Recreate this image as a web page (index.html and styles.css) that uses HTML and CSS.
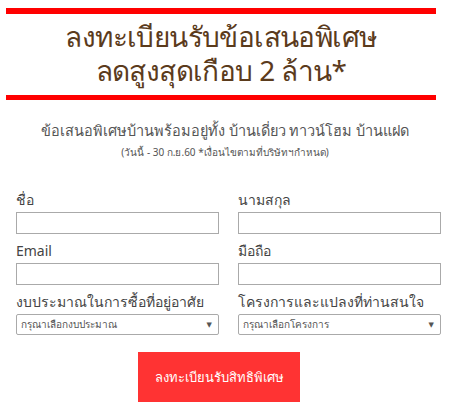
FILE: index.html
```html
<!DOCTYPE html>
<html lang="th">
<head>
    <meta charset="UTF-8">
    <meta name="viewport" content="width=device-width, initial-scale=1.0">
    <title>ลงทะเบียนรับข้อเสนอพิเศษ</title>
    <link rel="stylesheet" href="styles.css">
</head>
<body>

<div class="page">
    <div class="headline">
        <h1 class="headline-text">
            <span class="headline-line">ลงทะเบียนรับข้อเสนอพิเศษ</span>
            <span class="headline-line">ลดสูงสุดเกือบ 2 ล้าน*</span>
        </h1>
    </div>

    <p class="subtitle">ข้อเสนอพิเศษบ้านพร้อมอยู่ทั้ง บ้านเดี่ยว ทาวน์โฮม บ้านแฝด</p>
    <p class="note">(วันนี้ - 30 ก.ย.60 *เงื่อนไขตามที่บริษัทฯกำหนด)</p>

    <form class="register-form" onsubmit="return false;">
        <div class="field">
            <label class="field-label">ชื่อ</label>
            <input class="field-input" type="text">
        </div>
        <div class="field">
            <label class="field-label">นามสกุล</label>
            <input class="field-input" type="text">
        </div>
        <div class="field">
            <label class="field-label">Email</label>
            <input class="field-input" type="text">
        </div>
        <div class="field">
            <label class="field-label">มือถือ</label>
            <input class="field-input" type="text">
        </div>
        <div class="field">
            <label class="field-label">งบประมาณในการซื้อที่อยู่อาศัย</label>
            <div class="field-select">
                <span>กรุณาเลือกงบประมาณ</span>
                <span class="caret">▼</span>
            </div>
        </div>
        <div class="field">
            <label class="field-label">โครงการและแปลงที่ท่านสนใจ</label>
            <div class="field-select">
                <span>กรุณาเลือกโครงการ</span>
                <span class="caret">▼</span>
            </div>
        </div>
        <div class="actions">
            <button class="submit-button">ลงทะเบียนรับสิทธิพิเศษ</button>
        </div>
    </form>
</div>

</body>
</html>
```

FILE: styles.css
```css
body {
    font-family: "Noto Sans", "DejaVu Sans", sans-serif;
    background-color: #fff;
    margin: 0;
    padding: 0;
}

.page {
    width: 450px;
    padding-top: 8px;
}

.headline {
    margin: 0 14px 0 6px;
    border-top: 6px solid #ff0000;
    border-bottom: 5px solid #ff0000;
    padding: 5px 0 8px;
}

.headline-text {
    margin: 0;
    font-size: 28px;
    font-weight: normal;
    letter-spacing: -0.6px;
    color: #5b3b1c;
    text-align: center;
}

.headline-line {
    display: block;
    height: 34px;
    line-height: 34px;
}

.subtitle {
    margin: 20px 0 0;
    font-size: 14.5px;
    line-height: 20px;
    color: #555;
    text-align: center;
}

.note {
    margin: 5px 0 0;
    font-size: 10px;
    line-height: 14px;
    color: #555;
    text-align: center;
}

.register-form {
    display: grid;
    grid-template-columns: 203px 203px;
    column-gap: 19px;
    row-gap: 7px;
    padding: 31px 0 0 16px;
}

.field {
    display: flex;
    flex-direction: column;
}

.field-label {
    display: block;
    height: 20px;
    font-size: 14px;
    line-height: 20px;
    color: #444;
    margin-bottom: 2px;
}

.field-input {
    box-sizing: border-box;
    height: 22px;
    margin: 0;
    border: 1px solid #aaa;
    background: #fff;
}

.field-select {
    box-sizing: border-box;
    height: 21px;
    display: flex;
    justify-content: space-between;
    align-items: center;
    padding: 0 6px 0 4px;
    border: 1px solid #aaa;
    border-radius: 2px;
    font-size: 10px;
    color: #555;
}

.caret {
    font-size: 7px;
    color: #555;
}

.actions {
    grid-column: 1 / 3;
    display: flex;
    justify-content: center;
    padding: 10px 19px 0 0;
}

.submit-button {
    width: 162px;
    height: 50px;
    border: none;
    background-color: #ff3333;
    color: #fff;
    font-family: inherit;
    font-size: 13px;
    cursor: pointer;
}
```
